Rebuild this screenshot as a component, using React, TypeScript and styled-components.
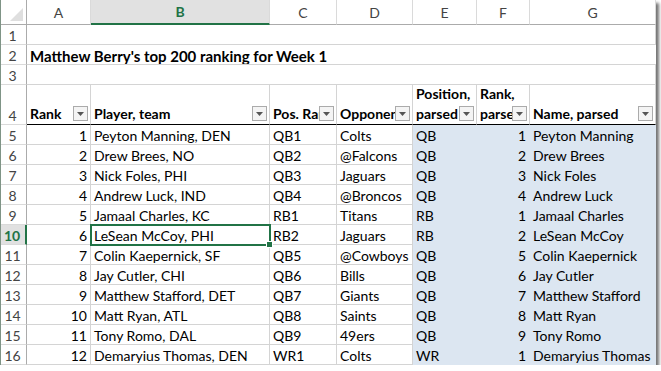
import React from "react";
import styled, { createGlobalStyle, css } from "styled-components";

const GREEN = "#217346";
const GRID = "#d4d4d4";
const BLUE = "#dce6f1";

const GlobalStyle = createGlobalStyle`
  html, body {
    margin: 0;
    padding: 0;
    background: #fff;
  }
  body {
    font-family: Lato, "Liberation Sans", sans-serif;
    font-size: 14px;
    color: #000;
  }
`;

type Player = {
  rank: number;
  player: string;
  pos: string;
  opp: string;
  p: string;
  r: number;
  name: string;
};

const PLAYERS: Player[] = [
  { rank: 1, player: "Peyton Manning, DEN", pos: "QB1", opp: "Colts", p: "QB", r: 1, name: "Peyton Manning" },
  { rank: 2, player: "Drew Brees, NO", pos: "QB2", opp: "@Falcons", p: "QB", r: 2, name: "Drew Brees" },
  { rank: 3, player: "Nick Foles, PHI", pos: "QB3", opp: "Jaguars", p: "QB", r: 3, name: "Nick Foles" },
  { rank: 4, player: "Andrew Luck, IND", pos: "QB4", opp: "@Broncos", p: "QB", r: 4, name: "Andrew Luck" },
  { rank: 5, player: "Jamaal Charles, KC", pos: "RB1", opp: "Titans", p: "RB", r: 1, name: "Jamaal Charles" },
  { rank: 6, player: "LeSean McCoy, PHI", pos: "RB2", opp: "Jaguars", p: "RB", r: 2, name: "LeSean McCoy" },
  { rank: 7, player: "Colin Kaepernick, SF", pos: "QB5", opp: "@Cowboys", p: "QB", r: 5, name: "Colin Kaepernick" },
  { rank: 8, player: "Jay Cutler, CHI", pos: "QB6", opp: "Bills", p: "QB", r: 6, name: "Jay Cutler" },
  { rank: 9, player: "Matthew Stafford, DET", pos: "QB7", opp: "Giants", p: "QB", r: 7, name: "Matthew Stafford" },
  { rank: 10, player: "Matt Ryan, ATL", pos: "QB8", opp: "Saints", p: "QB", r: 8, name: "Matt Ryan" },
  { rank: 11, player: "Tony Romo, DAL", pos: "QB9", opp: "49ers", p: "QB", r: 9, name: "Tony Romo" },
  { rank: 12, player: "Demaryius Thomas, DEN", pos: "WR1", opp: "Colts", p: "WR", r: 1, name: "Demaryius Thomas" },
];

const COLS = ["A", "B", "C", "D", "E", "F", "G"];
const HEADERS = ["Rank", "Player, team", "Pos. Rank", "Opponent", "Position, parsed", "Rank, parsed", "Name, parsed"];

function App() {
  return (
    <>
      <GlobalStyle />
      <Frame>
        <Sheet>
          <Corner />
          {COLS.map((c) => (
            <ColHead key={c} $active={c === "B"}>
              {c}
            </ColHead>
          ))}

          <RowHead>1</RowHead>
          <Cell $span={7} />

          <RowHead>2</RowHead>
          <TitleCell $span={7}>Matthew Berry's top 200 ranking for Week 1</TitleCell>

          <RowHead>3</RowHead>
          <Cell $span={7} />

          <RowHead>4</RowHead>
          {HEADERS.map((h, i) => (
            <HeadCell key={h}>
              <HeadLabel $wrap={i === 4 || i === 5}>{h}</HeadLabel>
              <FilterBtn>
                <svg width="7" height="4" viewBox="0 0 7 4">
                  <path d="M0 0h7L3.5 4z" fill="#555" />
                </svg>
              </FilterBtn>
            </HeadCell>
          ))}

          {PLAYERS.map((p, i) => {
            const row = i + 5;
            return (
              <React.Fragment key={row}>
                <RowHead $active={row === 10}>{row}</RowHead>
                <Cell $align="right">{p.rank}</Cell>
                <Cell $selected={row === 10}>{p.player}</Cell>
                <Cell>{p.pos}</Cell>
                <Cell>{p.opp}</Cell>
                <Cell $blue>{p.p}</Cell>
                <Cell $blue $align="right">{p.r}</Cell>
                <Cell $blue>{p.name}</Cell>
              </React.Fragment>
            );
          })}
        </Sheet>
      </Frame>
    </>
  );
}

export default App;

const Frame = styled.div`
  width: 656px;
  border-left: 1px solid #7f9486;
  box-sizing: border-box;
  box-shadow: 3px 3px 3px rgba(0, 0, 0, 0.55);
  background: #fff;
`;

const Sheet = styled.div`
  display: grid;
  grid-template-columns: 26px 64px 179px 67px 76px 64px 53px 126px;
  grid-template-rows: 25px 20px 20px 20px 40px repeat(12, 20px);
  overflow: hidden;
`;

const Corner = styled.div`
  position: relative;
  border-right: 1px solid #ababab;
  border-bottom: 1px solid #ababab;
  &::after {
    content: "";
    position: absolute;
    right: 3px;
    bottom: 3px;
    width: 0;
    height: 0;
    border-left: 13px solid transparent;
    border-bottom: 13px solid #dfdfdf;
  }
`;

const ColHead = styled.div<{ $active?: boolean }>`
  display: flex;
  align-items: center;
  justify-content: center;
  color: #444;
  font-size: 14px;
  border-right: 1px solid #dadada;
  border-bottom: 1px solid #ababab;
  ${(p) =>
    p.$active &&
    css`
      background: #e1e1e1;
      color: ${GREEN};
      font-weight: 700;
      border-bottom: 2px solid ${GREEN};
    `}
`;

const RowHead = styled.div<{ $active?: boolean }>`
  display: flex;
  align-items: flex-end;
  justify-content: center;
  padding-right: 2px;
  box-sizing: border-box;
  color: #444;
  font-size: 14px;
  line-height: 16px;
  border-right: 1px solid #ababab;
  border-bottom: 1px solid #dadada;
  ${(p) =>
    p.$active &&
    css`
      background: #e1e1e1;
      color: ${GREEN};
      font-weight: 700;
      border-right: 2px solid ${GREEN};
    `}
`;

const Cell = styled.div<{ $align?: string; $blue?: boolean; $selected?: boolean; $span?: number }>`
  position: relative;
  display: flex;
  align-items: flex-end;
  justify-content: ${(p) => (p.$align === "right" ? "flex-end" : "flex-start")};
  padding: 0 3px 0 3px;
  box-sizing: border-box;
  line-height: 16px;
  white-space: nowrap;
  overflow: hidden;
  border-right: 1px solid ${GRID};
  border-bottom: 1px solid ${GRID};
  ${(p) => p.$span && css`grid-column: span ${p.$span};`}
  ${(p) =>
    p.$blue &&
    css`
      background: ${BLUE};
      border-color: ${BLUE};
    `}
  ${(p) =>
    p.$selected &&
    css`
      overflow: visible;
      outline: 2px solid ${GREEN};
      outline-offset: -1px;
      z-index: 1;
      &::after {
        content: "";
        position: absolute;
        right: -4px;
        bottom: -4px;
        width: 5px;
        height: 5px;
        background: ${GREEN};
        border: 1px solid #fff;
      }
    `}
`;

const TitleCell = styled(Cell)`
  font-weight: 700;
  font-size: 15px;
  border-right: none;
`;

const HeadCell = styled.div`
  position: relative;
  display: flex;
  align-items: flex-end;
  padding: 0 1px 0 3px;
  box-sizing: border-box;
  font-weight: 700;
  line-height: 20px;
  border-right: 1px solid ${GRID};
  border-bottom: 1px solid #000;
  overflow: hidden;
`;

const HeadLabel = styled.div<{ $wrap?: boolean }>`
  flex: 1;
  min-width: 0;
  white-space: ${(p) => (p.$wrap ? "normal" : "nowrap")};
`;

/* dropdown arrow sits over the cell text, as Excel draws it */
const FilterBtn = styled.div`
  position: absolute;
  right: 2px;
  bottom: 3px;
  width: 15px;
  height: 15px;
  box-sizing: border-box;
  border: 1px solid #ababab;
  background: #f4f4f4;
  display: flex;
  align-items: center;
  justify-content: center;
`;
